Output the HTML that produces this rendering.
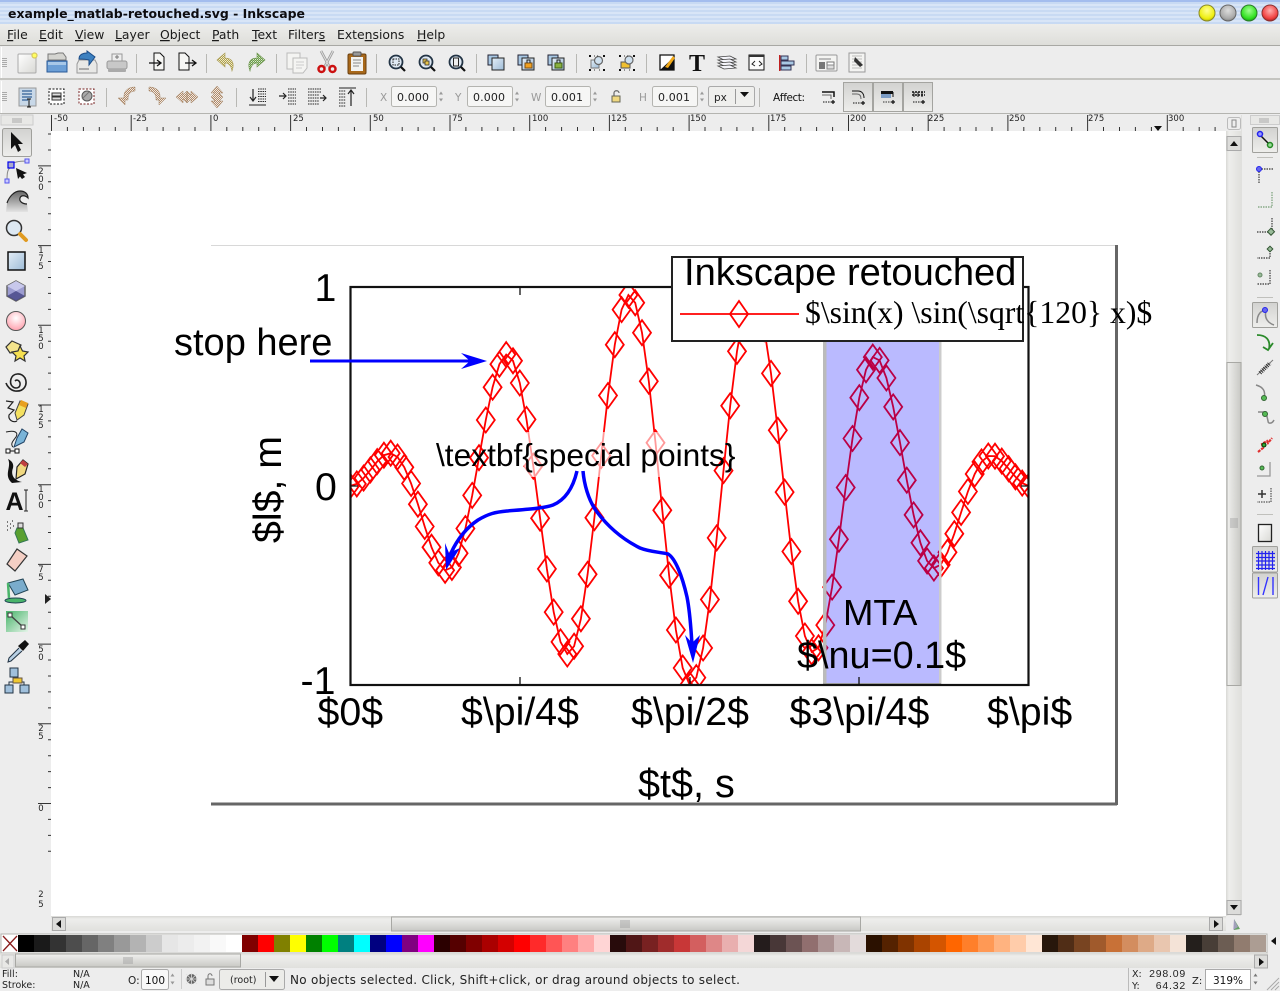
<!DOCTYPE html>
<html><head><meta charset="utf-8"><title>example_matlab-retouched.svg - Inkscape</title>
<style>
html,body{margin:0;padding:0;background:#ededed;overflow:hidden}
svg{display:block}
.d{font-family:"DejaVu Sans",sans-serif}
.l{font-family:"Liberation Sans",sans-serif}
.s{font-family:"Liberation Serif",serif}
.m{font-size:12.4px;fill:#1a1a1a}
.u{text-decoration:underline}
.r{font-size:8.5px;fill:#222}
.i{font-size:11px;fill:#222}
.g{font-size:10.5px;fill:#999}
.t{font-size:39.3px;fill:#000}
</style></head><body>
<svg width="1280" height="991" viewBox="0 0 1280 991" xmlns="http://www.w3.org/2000/svg">
<defs>
<pattern id="stripe" width="4" height="4" patternUnits="userSpaceOnUse"><rect width="4" height="4" fill="#c8daf3"/><rect width="4" height="2" fill="#d8e5f7"/></pattern>
<linearGradient id="menu" x1="0" y1="0" x2="0" y2="1"><stop offset="0" stop-color="#ededeb"/><stop offset="1" stop-color="#dededa"/></linearGradient>
<linearGradient id="sbv" x1="0" y1="0" x2="1" y2="0"><stop offset="0" stop-color="#d8d8d5"/><stop offset=".2" stop-color="#eeeeec"/><stop offset="1" stop-color="#e0e0dd"/></linearGradient>
<linearGradient id="sbh" x1="0" y1="0" x2="0" y2="1"><stop offset="0" stop-color="#d8d8d5"/><stop offset=".2" stop-color="#eeeeec"/><stop offset="1" stop-color="#e0e0dd"/></linearGradient>
<linearGradient id="thv" x1="0" y1="0" x2="1" y2="0"><stop offset="0" stop-color="#f0f0ee"/><stop offset="1" stop-color="#c8c8c4"/></linearGradient>
<linearGradient id="thh" x1="0" y1="0" x2="0" y2="1"><stop offset="0" stop-color="#f0f0ee"/><stop offset="1" stop-color="#c8c8c4"/></linearGradient>
<linearGradient id="btn" x1="0" y1="0" x2="0" y2="1"><stop offset="0" stop-color="#d2d2d0"/><stop offset="1" stop-color="#eeeeec"/></linearGradient>
<linearGradient id="blue" x1="0" y1="0" x2="1" y2="1"><stop offset="0" stop-color="#e4eef7"/><stop offset="1" stop-color="#9dbbd6"/></linearGradient>
<linearGradient id="paper" x1="0" y1="0" x2="1" y2="1"><stop offset="0" stop-color="#fff"/><stop offset="1" stop-color="#d8d8d4"/></linearGradient>
<radialGradient id="wy" cx=".5" cy=".35" r=".7"><stop offset="0" stop-color="#ffff90"/><stop offset=".7" stop-color="#eeee10"/><stop offset="1" stop-color="#a8a800"/></radialGradient>
<radialGradient id="wg" cx=".5" cy=".35" r=".7"><stop offset="0" stop-color="#ddd"/><stop offset=".7" stop-color="#aaa"/><stop offset="1" stop-color="#777"/></radialGradient>
<radialGradient id="wn" cx=".5" cy=".35" r=".7"><stop offset="0" stop-color="#a0ff90"/><stop offset=".7" stop-color="#30e020"/><stop offset="1" stop-color="#108810"/></radialGradient>
<radialGradient id="wr" cx=".5" cy=".35" r=".7"><stop offset="0" stop-color="#ffb0b0"/><stop offset=".7" stop-color="#f04040"/><stop offset="1" stop-color="#901818"/></radialGradient>
<radialGradient id="pink" cx=".5" cy=".35" r=".7"><stop offset="0" stop-color="#fff"/><stop offset="1" stop-color="#ff9aa8"/></radialGradient>
<linearGradient id="wave" x1="0" y1="0" x2="0" y2="1"><stop offset="0" stop-color="#666"/><stop offset="1" stop-color="#e4e4e4"/></linearGradient>
<linearGradient id="green" x1="0" y1="0" x2="1" y2="1"><stop offset="0" stop-color="#49b46a"/><stop offset="1" stop-color="#e4f4e8"/></linearGradient>
<clipPath id="plot"><rect x="350" y="287" width="679" height="398"/></clipPath>
<pattern id="dith" width="2" height="2" patternUnits="userSpaceOnUse"><rect width="2" height="2" fill="#b08a6a"/><rect width="1" height="1" fill="#f0e8e0"/><rect x="1" y="1" width="1" height="1" fill="#f0e8e0"/></pattern>
<pattern id="dithY" width="2" height="2" patternUnits="userSpaceOnUse"><rect width="2" height="2" fill="#b0a04a"/><rect width="1" height="1" fill="#f0ecd0"/><rect x="1" y="1" width="1" height="1" fill="#e4e0c0"/></pattern>
<pattern id="dithG" width="2" height="2" patternUnits="userSpaceOnUse"><rect width="2" height="2" fill="#6a9a4a"/><rect width="1" height="1" fill="#dcead0"/><rect x="1" y="1" width="1" height="1" fill="#a8c890"/></pattern>
</defs>

<!-- base -->
<rect width="1280" height="991" fill="#ededed"/>
<!-- title bar -->
<rect width="1280" height="24" fill="url(#stripe)"/>
<rect width="1280" height="2" fill="#a3bdee"/>
<text class="d" x="8" y="18" font-size="12" font-weight="bold" fill="#0c0c10" textLength="297" lengthAdjust="spacingAndGlyphs">example_matlab-retouched.svg - Inkscape</text>
<circle cx="1207" cy="13" r="8" fill="url(#wy)" stroke="#88882a"/>
<circle cx="1228" cy="13" r="8" fill="url(#wg)" stroke="#666"/>
<circle cx="1249" cy="13" r="8" fill="url(#wn)" stroke="#2a7a2a"/>
<circle cx="1270" cy="13" r="8" fill="url(#wr)" stroke="#883030"/>
<!-- menu -->
<rect y="24" width="1280" height="21" fill="url(#menu)"/>
<rect y="45" width="1280" height="1" fill="#a8a8a4"/>
<g class="d m">
<text x="7" y="39"><tspan class="u">F</tspan>ile</text>
<text x="39" y="39"><tspan class="u">E</tspan>dit</text>
<text x="75" y="39"><tspan class="u">V</tspan>iew</text>
<text x="115" y="39"><tspan class="u">L</tspan>ayer</text>
<text x="160" y="39"><tspan class="u">O</tspan>bject</text>
<text x="212" y="39"><tspan class="u">P</tspan>ath</text>
<text x="252" y="39"><tspan class="u">T</tspan>ext</text>
<text x="288" y="39">Filter<tspan class="u">s</tspan></text>
<text x="337" y="39">Exte<tspan class="u">n</tspan>sions</text>
<text x="417" y="39"><tspan class="u">H</tspan>elp</text>
</g>
<!-- toolbars bg -->
<rect y="78" width="1280" height="2" fill="#c4c4c0"/>
<rect y="113" width="1280" height="1" fill="#b4b4b0"/>
<rect x="1" y="47" width="1" height="31" fill="#fff"/><rect x="1" y="81" width="1" height="32" fill="#fff"/>
<g fill="#aaa"><rect x="2" y="58" width="5" height="1"/><rect x="2" y="60" width="5" height="1"/><rect x="2" y="62" width="5" height="1"/><rect x="2" y="64" width="5" height="1"/><rect x="2" y="66" width="5" height="1"/>
<rect x="2" y="92" width="5" height="1"/><rect x="2" y="94" width="5" height="1"/><rect x="2" y="96" width="5" height="1"/><rect x="2" y="98" width="5" height="1"/><rect x="2" y="100" width="5" height="1"/></g>
<!-- separators -->
<g fill="#b8b8b4">
<rect x="136" y="54" width="1" height="19"/><rect x="206" y="54" width="1" height="19"/><rect x="276" y="54" width="1" height="19"/><rect x="376" y="54" width="1" height="19"/><rect x="476" y="54" width="1" height="19"/><rect x="576" y="54" width="1" height="19"/><rect x="646" y="54" width="1" height="19"/><rect x="806" y="54" width="1" height="19"/>
<rect x="106" y="88" width="1" height="19"/><rect x="236" y="88" width="1" height="19"/><rect x="366" y="88" width="1" height="19"/><rect x="759" y="88" width="1" height="19"/>
</g>

<!-- toolbar 1 icons -->
<g transform="translate(27,63)"><rect x="-9" y="-9" width="18" height="19" rx="1" fill="url(#paper)" stroke="#aaa"/><circle cx="7.500" cy="-7.500" r="2.500" fill="#ffff60" stroke="#d8c860" stroke-width="1.200"/></g>
<g transform="translate(57,63)"><path d="M-9,-3V-9H-2L1,-10H6L9,-6V-3Z" fill="#d4d4d0" stroke="#777"/><rect x="-10" y="-2" width="20" height="11" fill="#6c9fd6" stroke="#2a5a98"/><rect x="-9" y="-1" width="18" height="3" fill="#a8c8e8"/></g>
<g transform="translate(87,63)"><path d="M-10,1L-8,-3H8L10,1V10H-10Z" fill="#e8e8e6" stroke="#999"/><rect x="-8" y="5" width="10" height="2" fill="#aaa"/><path d="M-8,-4C-8,-9 -3,-10 0,-10V-12L8,-6L2,2V-3C-2,-4 -5,-4 -8,-4Z" fill="#3c80c0" stroke="#1c4c88"/></g>
<g transform="translate(117,63)"><rect x="-5" y="-9" width="10" height="7" fill="#eee" stroke="#999"/><rect x="-10" y="-2" width="20" height="8" rx="2" fill="#c8c8c8" stroke="#999"/><rect x="-9" y="6" width="18" height="3" rx="1" fill="#aaa"/><path d="M-2,-6H2M0,-8V-4" stroke="#777"/></g>
<g transform="translate(157,63)"><path d="M-3,-10H3L7,-6V7H-3Z" fill="#f6f6f4" stroke="#111"/><path d="M-8,0H3M0,-3L4,0L0,3" fill="none" stroke="#111" stroke-width="1.300"/></g>
<g transform="translate(186,63)"><path d="M-7,-10H-1L3,-6V7H-7Z" fill="#f6f6f4" stroke="#111"/><path d="M-1,0H9M6,-3L10,0L6,3" fill="none" stroke="#111" stroke-width="1.300"/></g>
<g transform="translate(225,63)"><path d="M-8,-3L0,-10V-5C7,-5 10,0 7,8C6,2 3,0 0,0V4Z" fill="url(#dithY)" stroke="#a89a50" stroke-width=".6"/></g>
<g transform="translate(257,63)"><path d="M8,-3L0,-10V-5C-7,-5 -10,0 -7,8C-6,2 -3,0 0,0V4Z" fill="url(#dithG)" stroke="#689048" stroke-width=".6"/></g>
<g transform="translate(297,63)" stroke="#bbb" fill="#f4f4f2"><rect x="-10" y="-10" width="13" height="16"/><path d="M-4,-5H10V5L6,10H-4Z"/><path d="M-1,-1H7M-1,2H7M-1,5H5" stroke="#ccc" fill="none"/></g>
<g transform="translate(327,63)"><path d="M-6,-12L3,5M6,-12L-3,5" stroke="#9a9a9a" stroke-width="2.600"/><path d="M-6,-12L3,5M6,-12L-3,5" stroke="#e0e0e0" stroke-width="1"/><circle cx="-5.500" cy="6" r="3" fill="none" stroke="#cc1111" stroke-width="2.500"/><circle cx="5.500" cy="6" r="3" fill="none" stroke="#cc1111" stroke-width="2.500"/></g>
<g transform="translate(357,63)"><rect x="-9" y="-9" width="18" height="20" rx="1.500" fill="#a8681a" stroke="#6a4010"/><rect x="-6" y="-6" width="12" height="14" fill="#f2f2f0"/><rect x="-4" y="-11" width="8" height="4" rx="1" fill="#999" stroke="#555"/><path d="M-4,-3H4M-4,0H4M-4,3H2" stroke="#888"/></g>
<!-- zoom -->
<g transform="translate(397,63)"><circle cx="-1" cy="-1" r="6.500" fill="#dfe9f3" stroke="#234" stroke-width="1.800"/><rect x="-4" y="-4" width="6" height="6" fill="none" stroke="#222" stroke-dasharray="1.500 1"/><path d="M4,4L8,8" stroke="#111" stroke-width="2.200"/></g>
<g transform="translate(427,63)"><circle cx="-1" cy="-1" r="6.500" fill="#dfe9f3" stroke="#234" stroke-width="1.800"/><rect x="-4" y="-4" width="4" height="4" fill="#e8c44a" stroke="#333" stroke-width=".8"/><rect x="-2" y="-2" width="4" height="4" fill="#e8c44a" stroke="#333" stroke-width=".8"/><path d="M4,4L8,8" stroke="#111" stroke-width="2.200"/></g>
<g transform="translate(457,63)"><circle cx="-1" cy="-1" r="6.500" fill="#dfe9f3" stroke="#234" stroke-width="1.800"/><rect x="-3.500" y="-5" width="5" height="8" fill="#eee" stroke="#222"/><path d="M4,4L8,8" stroke="#111" stroke-width="2.200"/></g>
<!-- dup -->
<g transform="translate(497,63)"><rect x="-9" y="-8" width="10" height="10" fill="#a8c8e4" stroke="#223"/><rect x="-5" y="-5" width="12" height="12" fill="url(#blue)" stroke="#222"/></g>
<g transform="translate(527,63)"><rect x="-9" y="-8" width="10" height="10" fill="#a8c8e4" stroke="#223"/><rect x="-5" y="-5" width="12" height="12" fill="url(#blue)" stroke="#222"/><rect x="-2" y="0" width="7" height="5" fill="#f0a020" stroke="#805010"/><path d="M0,0V-3H3V0" fill="none" stroke="#222"/></g>
<g transform="translate(557,63)"><rect x="-9" y="-8" width="10" height="10" fill="#a8c8e4" stroke="#223"/><rect x="-5" y="-5" width="12" height="12" fill="url(#blue)" stroke="#222"/><rect x="-2" y="0" width="7" height="5" fill="#88b040" stroke="#406010"/><path d="M0,0V-3H3V0" fill="none" stroke="#222"/></g>
<g transform="translate(597,63)"><rect x="-6" y="-3" width="8" height="8" fill="url(#blue)" stroke="#777"/><circle cx="1.500" cy="-2.500" r="4" fill="#cfe0ee" stroke="#666" stroke-width="1.200"/><path d="M-8,-8h2v2h-2zM6,-8h2v2h-2zM-8,6h2v2h-2zM6,6h2v2h-2z" fill="#111"/><path d="M-3,-7.500h1v1h-1zM0,-7.500h1v1h-1zM-3,6.500h1v1h-1zM2,6.500h1v1h-1z" fill="#333"/></g>
<g transform="translate(627,63)"><rect x="-6" y="-1" width="9" height="6" fill="#f0c030" stroke="#555"/><circle cx="2" cy="-3" r="4" fill="#cfe0ee" stroke="#666" stroke-width="1.200"/><path d="M-8,-8h2v2h-2zM6,-8h2v2h-2zM-8,6h2v2h-2zM6,6h2v2h-2z" fill="#111"/><path d="M-3,-7.500h1v1h-1zM0,-7.500h1v1h-1zM-3,6.500h1v1h-1zM2,6.500h1v1h-1z" fill="#333"/></g>
<g transform="translate(667,63)"><path d="M-7,-8H7V7H-7Z" fill="#fff" stroke="#111" stroke-width="1.300"/><path d="M-7,7L7,-6V7Z" fill="#111"/><path d="M-2,4L6,-7L8,-5L1,5Z" fill="#f0a818"/></g>
<text x="697" y="71" text-anchor="middle" class="s" font-size="24" font-weight="bold" fill="#111">T</text>
<g transform="translate(727,63)" fill="#f4f4fa" stroke="#444" stroke-width=".8"><path d="M-9,-6L3,-7L9,-4L-3,-3Z"/><path d="M-9,-3L3,-4L9,-1L-3,0Z"/><path d="M-9,0L3,-1L9,2L-3,3Z"/><path d="M-9,3L3,2L9,5L-3,6Z"/></g>
<g transform="translate(757,63)"><rect x="-8" y="-8" width="15" height="15" fill="#fbfbfb" stroke="#111"/><rect x="-8" y="-8" width="15" height="2" fill="#333"/><path d="M-2,-2L-5,1L-2,3M2,-2L5,1L2,3" fill="none" stroke="#222"/></g>
<g transform="translate(787,63)"><rect x="-8" y="-8" width="1.400" height="16" fill="#c02020"/><rect x="-6" y="-7" width="7" height="4" fill="#a8c8e4" stroke="#335"/><rect x="-6" y="-2" width="13" height="4" fill="#a8c8e4" stroke="#335"/><rect x="-6" y="3" width="10" height="4" fill="#a8c8e4" stroke="#335"/></g>
<g transform="translate(827,63)"><rect x="-11" y="-8" width="21" height="16" rx="1" fill="#f4f4f2" stroke="#999"/><rect x="-8" y="-5" width="12" height="2" fill="#bbb"/><rect x="-8" y="-1" width="6" height="7" fill="#777"/><rect x="0" y="-1" width="7" height="3" fill="#fff" stroke="#777"/><rect x="0" y="2" width="7" height="4" fill="#ddd" stroke="#888"/></g>
<g transform="translate(857,63)"><rect x="-8" y="-10" width="16" height="19" fill="#f4f4f2" stroke="#999"/><path d="M-5,-7H5M-5,-4H5M-5,-1H5M-5,2H5M-5,5H5" stroke="#bbb"/><path d="M-2,-6L3,-1L6,2L3,4L0,1L-3,-2Z" fill="#333"/></g>

<!-- toolbar 2 icons -->
<g transform="translate(27,97)"><rect x="-8" y="-9" width="17" height="18" fill="#c8d8e8" stroke="#999"/><path d="M-5,-6H5M-5,-3H5M-5,0H5M-5,3H1" stroke="#4a74a4" stroke-width="1.400"/><path d="M2,2V10M0,2H4M0,10H4" stroke="#111"/></g>
<g transform="translate(57,97)"><rect x="-8" y="-8" width="15" height="15" fill="#fff" stroke="#111" stroke-dasharray="2 1.500"/><path d="M-5,-4H4V-1H-5ZM-5,0H4V3H-5Z" fill="#ddd" stroke="#333"/></g>
<g transform="translate(87,97)"><rect x="-8" y="-8" width="15" height="15" fill="#fff" stroke="#722" stroke-dasharray="2 1.500"/><circle cx="0" cy="-1" r="5" fill="#aaa" stroke="#555"/><path d="M-5,2L2,-5" stroke="#777"/></g>
<g transform="translate(127,97)"><path d="M-9,1L-2,8V3H1V1C1,-3 4,-6 8,-6V-10C1,-10 -3,-6 -3,-1V1H-3Z" fill="url(#dith)" stroke="#a08060" stroke-width=".5"/></g>
<g transform="translate(157,97)"><path d="M9,1L2,8V3H-1V1C-1,-3 -4,-6 -8,-6V-10C-1,-10 3,-6 3,-1V1H3Z" fill="url(#dith)" stroke="#a08060" stroke-width=".5"/></g>
<g transform="translate(187,97)"><path d="M-11,0L-4,-6V-2L0,-6V6L-4,2V6ZM11,0L4,-6V-2L0,-6V6L4,2V6Z" fill="url(#dith)" stroke="#a08060" stroke-width=".5"/></g>
<g transform="translate(217,97)"><path d="M0,-11L6,-4H2L6,0L2,4H6L0,11L-6,4H-2L-6,0L-2,-4H-6Z" fill="url(#dith)" stroke="#a08060" stroke-width=".5"/></g>
<g transform="translate(257,97)" stroke="#222" fill="none"><path d="M1,-8H9M1,-5.500H9M1,-3H9M1,-.5H9M1,2H9M1,4.500H9" stroke-dasharray="1.500 .8"/><path d="M-4,-8V3M-7,0L-4,4L-1,0" stroke-width="1.200"/><path d="M-8,8H9"/></g>
<g transform="translate(287,97)" stroke="#222" fill="none"><path d="M1,-8H9M1,-5H9M1,-2H9M1,1H9M1,4H9M1,7H9" stroke-dasharray="1.500 .8"/><path d="M-8,-1H-1M-4,-4L-1,-1L-4,2" stroke-width="1.200"/></g>
<g transform="translate(317,97)" stroke="#222" fill="none"><path d="M-9,-8H4M-9,-5H4M-9,-2H2M-9,1H2M-9,4H2M-9,7H2" stroke-dasharray="1.500 .8"/><path d="M3,1H9M6,-2L9,1L6,4" stroke-width="1.200"/></g>
<g transform="translate(347,97)" stroke="#222" fill="none"><path d="M-8,-9H9"/><path d="M-8,-6H-1M-8,-3H-1M-8,0H-1M-8,3H-1M-8,6H-1M-8,9H-1" stroke-dasharray="1.500 .8"/><path d="M4,9V-6M1,-3L4,-7L7,-3" stroke-width="1.200"/></g>

<!-- inputs -->
<g fill="#f6f6f5" stroke="#b4b4b0"><rect x="391.500" y="86.500" width="45" height="20" rx="2"/><rect x="467.500" y="86.500" width="45" height="20" rx="2"/><rect x="545.500" y="86.500" width="45" height="20" rx="2"/><rect x="652.500" y="86.500" width="45" height="20" rx="2"/></g>
<rect x="708.500" y="86.500" width="46" height="20" rx="2" fill="#efefed" stroke="#aaa"/>
<rect x="735" y="89" width="1" height="15" fill="#999"/>
<path d="M740,92H749L744.500,97Z" fill="#111"/>
<g class="d i"><text x="397" y="101" textLength="32">0.000</text><text x="473" y="101" textLength="32">0.000</text><text x="551" y="101" textLength="32">0.001</text><text x="658" y="101" textLength="32">0.001</text><text x="714" y="101" font-size="10.500">px</text></g>
<g class="d g"><text x="380" y="101">X</text><text x="455" y="101">Y</text><text x="531" y="101">W</text><text x="639" y="101">H</text></g>
<g fill="#999"><path d="M439,94.500h4l-2,-3zM439,98.500h4l-2,3zM515,94.500h4l-2,-3zM515,98.500h4l-2,3zM593,94.500h4l-2,-3zM593,98.500h4l-2,3zM700,94.500h4l-2,-3zM700,98.500h4l-2,3z"/></g>
<g transform="translate(616,97)"><rect x="-4" y="-1" width="8" height="6" fill="#f0d880" stroke="#665"/><path d="M-2,-1V-4C-2,-7 3,-7 3,-4" fill="none" stroke="#666" stroke-width="1.200"/></g>
<text class="d" x="773" y="101" font-size="10.500" fill="#111" textLength="32">Affect:</text>
<rect x="843.500" y="82.500" width="29" height="29" fill="url(#btn)" stroke="#a4a4a0"/>
<rect x="873.500" y="82.500" width="29" height="29" fill="url(#btn)" stroke="#a4a4a0"/>
<rect x="903.500" y="82.500" width="29" height="29" fill="url(#btn)" stroke="#a4a4a0"/>
<g transform="translate(828,97)" fill="none" stroke="#111"><path d="M-6,-5H6V0" stroke-width="1.500"/><path d="M-6,-2H3V2" stroke="#666"/><path d="M-5,5H3" stroke-dasharray="1.500 1"/><path d="M3,5H7M5,3V7" stroke-width="1.200"/></g>
<g transform="translate(858,97)" fill="none" stroke="#111"><path d="M-6,-6H0C4,-6 6,-3 6,1"/><path d="M-6,-3H-1C2,-3 3,-1 3,2" stroke="#666"/><path d="M-5,6H3" stroke-dasharray="1.500 1"/><path d="M3,6H7M5,4V8" stroke-width="1.200"/></g>
<g transform="translate(888,97)" fill="none"><rect x="-7" y="-6" width="12" height="3" fill="#111"/><rect x="-7" y="-3" width="10" height="4" fill="#7c9cc4"/><path d="M5,-5V0" stroke="#111"/><path d="M-5,5H3" stroke="#333" stroke-dasharray="1.500 1"/><path d="M3,5H7M5,3V7" stroke="#111" stroke-width="1.200"/></g>
<g transform="translate(918,97)" fill="none" stroke="#111"><path d="M-6,-5H7M-6,-2H7" stroke-width="1.500" stroke-dasharray="2 1"/><path d="M-4,-5V0M0,-5V0M4,-5V0" /><path d="M-5,5H3" stroke-dasharray="1.500 1"/><path d="M3,5H7M5,3V7" stroke-width="1.200"/></g>

<!-- canvas -->
<rect x="51" y="131" width="1175" height="785" fill="#fff"/>

<!-- page -->
<rect x="211" y="245" width="905" height="1" fill="#d8d8d8"/>
<rect x="1115" y="245" width="3" height="560" fill="#666"/>
<rect x="211" y="802.500" width="906" height="3" fill="#666"/>

<!-- curve -->
<g clip-path="url(#plot)"><g id="curve" fill="none" stroke="#ff0000" stroke-width="1.800"></g></g>
<!-- pale rect -->
<rect x="524" y="432" width="144" height="45" fill="#fff" fill-opacity=".6"/>
<!-- blue band -->
<rect x="825" y="287" width="115" height="397" fill="#0000ff" fill-opacity=".27"/>
<rect x="823" y="287" width="3.500" height="398" fill="#bbb"/>
<rect x="939" y="287" width="2.500" height="398" fill="#ccc"/>
<rect x="823" y="683" width="118" height="2" fill="#aaa"/>

<!-- axes -->
<rect x="350.500" y="287" width="678" height="398" fill="none" stroke="#111" stroke-width="2.200"/>
<path d="M520,287v8M690,287v8M859,287v8M520,685v-8M690,685v-8M859,685v-8M350,486h8M1029,486h-8" stroke="#111" stroke-width="1.300"/>

<!-- legend -->
<rect x="672" y="257" width="351" height="84" fill="#fff" stroke="#222" stroke-width="2"/>
<path d="M680,314H799" stroke="#f00" stroke-width="1.800"/>
<path d="M739,301L748,314L739,327L730,314Z" fill="none" stroke="#f00" stroke-width="1.800"/>

<!-- text -->
<g class="l">
<text class="t" x="314.500" y="301">1</text>
<text class="t" x="315" y="500">0</text>
<text class="t" x="300.500" y="694">-1</text>
<text class="t" x="317.500" y="725">$0$</text>
<text class="t" x="461" y="725">$\pi/4$</text>
<text class="t" x="631" y="725">$\pi/2$</text>
<text class="t" x="789.500" y="725">$3\pi/4$</text>
<text class="t" x="987" y="725">$\pi$</text>
<text x="638" y="797" font-size="39.600">$t$, s</text>
<text class="t" transform="translate(281,543) rotate(-90)">$l$, m</text>
<text x="174" y="355" font-size="38">stop here</text>
<text x="684" y="285" font-size="38.100">Inkscape retouched</text>
<text x="436" y="466" font-size="31.700">\textbf{special points}</text>
<text x="843" y="625" font-size="36.500">MTA</text>
<text x="797" y="668" font-size="37.800">$\nu=0.1$</text>
</g>
<text class="s" x="805" y="323" font-size="31.700" fill="#000">$\sin(x) \sin(\sqrt{120} x)$</text>

<!-- arrows -->
<g fill="none" stroke="#0000ff">
<path d="M310,361H472" stroke-width="3"/>
<path d="M577,471C573,488 565,500 553,505C545,508 530,509 507,511C495,512 488,514 478,520C466,528 457,540 451,553" stroke-width="3.500"/>
<path d="M583,471C584,483 588,500 597,512C606,524 620,538 640,548C650,552 660,552 668,554C675,558 682,575 687,597C690,612 691,628 692,645" stroke-width="3.500"/>
</g>
<g fill="#0000ff">
<path d="M487,361L461,353L470,361L461,369Z"/>
<path d="M446,570L445,543L449,553L460,548Z"/>
<path d="M693,663L685,635L692,643L700,635Z"/>
</g>

<!-- rulers -->
<rect x="36" y="114" width="1190" height="17" fill="#ededed"/>
<rect x="36" y="114" width="15" height="802" fill="#ededed"/>
<g id="rulers" fill="#333"></g>
<rect x="2" y="114" width="32" height="11" fill="#ededed"/>
<rect x="1" y="115" width="32" height="10" fill="#e8e8e6" stroke="#ccc"/>
<path d="M13,118v5M15,118v5M17,118v5M19,118v5M21,118v5" stroke="#999" stroke-width=".8"/>
<g class="d r">
<text x="54" y="121">-50</text><text x="133" y="121">-25</text><text x="213" y="121">0</text><text x="293" y="121">25</text><text x="373" y="121">50</text><text x="452" y="121">75</text><text x="532" y="121">100</text><text x="611" y="121">125</text><text x="690" y="121">150</text><text x="770" y="121">175</text><text x="850" y="121">200</text><text x="928" y="121">225</text><text x="1009" y="121">250</text><text x="1088" y="121">275</text><text x="1168" y="121">300</text>
</g>
<g class="d r" text-anchor="middle">
<text x="41" y="174">2</text><text x="41" y="182">0</text><text x="41" y="190">0</text>
<text x="41" y="253">1</text><text x="41" y="261">7</text><text x="41" y="269">5</text>
<text x="41" y="333">1</text><text x="41" y="341">5</text><text x="41" y="349">0</text>
<text x="41" y="412">1</text><text x="41" y="420">2</text><text x="41" y="428">5</text>
<text x="41" y="492">1</text><text x="41" y="500">0</text><text x="41" y="508">0</text>
<text x="41" y="572">7</text><text x="41" y="580">5</text>
<text x="41" y="652">5</text><text x="41" y="660">0</text>
<text x="41" y="731">2</text><text x="41" y="739">5</text>
<text x="41" y="811">0</text>
<text x="41" y="897">2</text><text x="41" y="907">5</text>
</g>
<path d="M1154,126H1162L1158,131Z" fill="#111"/>
<path d="M45,594V604L51,599Z" fill="#222"/>

<!-- left toolbox -->
<rect x="2.500" y="128.500" width="29" height="28" rx="2" fill="url(#btn)" stroke="#a0a09c"/>
<g transform="translate(16,142)"><path d="M-5,-10V7L-1,3L2,10L5,8L2,2H7Z" fill="#111"/></g>
<!-- node -->
<g transform="translate(16,172)"><path d="M-5,-7C-3,-10 4,-11 11,-11M-5,-5C-9,-3 -9,3 -9,9" fill="none" stroke="#888"/><rect x="-8" y="-10" width="6" height="6" fill="#aac" stroke="#00e" stroke-width="1.200"/><rect x="9" y="-13" width="4" height="4" fill="#ccf" stroke="#55e"/><rect x="-11" y="7" width="4" height="4" fill="#ccf" stroke="#55e"/><path d="M0,-4L11,1L7,2.500L9,5L6,7L4,4.500L2,7Z" fill="#111"/></g>
<!-- tweak -->
<path d="M6,212L7,203C9,197 14,191 20,191C25,191 28,194 28,198C25,195 21,195 20,198C19,201 22,204 27,204L28,212Z" fill="url(#wave)"/>
<path d="M7,203C9,197 14,191 20,191C25,191 28,194 28,198C25,195 21,195 20,198C19,201 22,204 27,204" fill="none" stroke="#222" stroke-width="1.200"/>
<!-- zoom -->
<g transform="translate(16,230)"><circle cx="-2" cy="-2" r="7.500" fill="#dde8f2" stroke="#333" stroke-width="1.500"/><path d="M4,4L10,10" stroke="#e09a20" stroke-width="4" stroke-linecap="round"/></g>
<rect x="8" y="252" width="17" height="18" fill="url(#blue)" stroke="#111" stroke-width="1.500"/>
<g transform="translate(16,291)"><path d="M0,-10L9,-5V5L0,10L-9,5V-5Z" fill="#9c9cd0" stroke="#666" stroke-width="1.500"/><path d="M-9,-5L0,0L9,-5L0,-10Z" fill="#c8c8ec"/><path d="M0,0L9,5L0,10L-9,5Z" fill="#454585" opacity=".8"/></g>
<circle cx="16" cy="321" r="9.500" fill="url(#pink)" stroke="#555" stroke-width="1"/>
<g transform="translate(16,351)"><path d="M-4,-10L5,-6L2,1L-6,2L-10,-4Z" fill="#f4e48c" stroke="#333" stroke-width="1.200"/><path d="M4,-5L6.500,0L12,1L8,5L9,10L4,7L-1,10L0,5L-4,1L2,0Z" fill="#f6e050" stroke="#333" stroke-width="1.200"/></g>
<path d="M15,381C18,378 22,383 19,387C15,390 9,386 11,379C13,373 21,372 25,378C28,385 24,392 15,391C10,390 7,386 6,383" fill="none" stroke="#222" stroke-width="1.600"/>
<!-- pencil -->
<g transform="translate(16,411)"><path d="M-10,-10L-3,-9L-8,-3L-2,-1L-7,4C-8,9 -3,12 1,10" fill="none" stroke="#222" stroke-width="1.200"/><path d="M1,9L-1,2L4,-10L12,-7L8,4Z" fill="#f4e060" stroke="#444"/><path d="M5,-11L12,-8L10,-3L3,-6Z" fill="#e8a020"/></g>
<!-- pen -->
<g transform="translate(16,441)"><path d="M-10,-9C-2,-11 3,-9 0,-4C-3,0 -6,3 -3,6" fill="none" stroke="#222"/><rect x="-10" y="8" width="4" height="4" fill="#fff" stroke="#111"/><rect x="-1" y="8" width="4" height="4" fill="#fff" stroke="#111"/><path d="M-6,10H-1" stroke="#111"/><path d="M-2,6L1,-3L6,-12L12,-8L8,1Z" fill="#7ab4d8" stroke="#246"/></g>
<!-- calligraphy -->
<g transform="translate(16,471)"><path d="M-8,-12C-4,-4 -13,4 -4,12L6,11C-4,9 -5,2 -3,-3C-2,-7 -4,-10 -8,-12Z" fill="#111"/><path d="M0,8L1,-4L7,-11L12,-7L9,3Z" fill="#f0d880" stroke="#222" stroke-width="1.200"/><path d="M4,-8L7,-11L12,-7L9,-4Z" fill="#c04040"/></g>
<text x="14.500" y="510" text-anchor="middle" class="l" font-size="25" font-weight="bold" fill="#111">A</text>
<path d="M26,490V511" stroke="#222"/><path d="M24,490h4M24,511h4" stroke="#222"/>
<!-- spray -->
<g transform="translate(16,531)"><path d="M-9,-9h2M-6,-7h2M-9,-5h2M-6,-3h2M-9,-1h2M-4,-10h2M-3,-5h2" stroke="#333" stroke-width="1.200" stroke-dasharray="1 1"/><path d="M1,-3H7L12,9L3,12L-1,2Z" fill="#59a030" stroke="#375"/><rect x="2" y="-8" width="5" height="5" fill="#ddd" stroke="#333"/></g>
<!-- eraser -->
<path d="M17,549L27,556L15,571L7,564Z" fill="#f4cfc4" stroke="#333" stroke-width="1.200"/>
<!-- bucket -->
<g transform="translate(16,591)"><ellipse cx="-.5" cy="9.500" rx="10.500" ry="2.500" fill="#49b46a" stroke="#245"/><path d="M-8,-8L7,-12L12,-1L-1,4Z" fill="#7aaccc" stroke="#245"/><path d="M-8,-8L-7,7" stroke="#49b46a" stroke-width="2.500"/></g>
<!-- gradient -->
<g transform="translate(16,621)"><rect x="-10" y="-10" width="22" height="21" fill="url(#green)"/><path d="M-6,-6L7,6" stroke="#444" stroke-width="1.400"/><rect x="-8" y="-8" width="4" height="4" fill="#fff" stroke="#333"/><rect x="5" y="4" width="4" height="4" fill="#fff" stroke="#333"/></g>
<!-- dropper -->
<g transform="translate(16,651)"><path d="M3,-3L-7,7L-8,11L-5,10L6,0" fill="#b8d0e4" stroke="#234"/><path d="M2,-5L7,0L13,-7L9,-11Z" fill="#111"/></g>
<!-- connector -->
<g transform="translate(16,681)" stroke="#234" fill="#a0c0dc"><path d="M-2,-4V0M-7,4V1H8V4" fill="none"/><rect x="-6" y="-13" width="8" height="9"/><rect x="-11" y="4" width="8" height="8"/><rect x="4" y="4" width="9" height="8"/><rect x="-3" y="-3" width="9" height="5" fill="#f0c830" stroke="#654"/></g>

<!-- v scrollbar -->
<rect x="1226" y="131" width="15" height="785" fill="url(#sbv)"/>
<rect x="1241" y="115" width="1" height="800" fill="#e0e0de"/>
<rect x="1227.500" y="117.500" width="13" height="12" rx="2" fill="#eee" stroke="#bbb"/>
<path d="M1232,120h4v7h-4z" fill="none" stroke="#888"/>
<rect x="1227" y="136.500" width="14" height="14" fill="#dcdcda" stroke="#aaa"/>
<path d="M1230,146H1238L1234,141Z" fill="#111"/>
<rect x="1227" y="362.500" width="14" height="323" fill="url(#thv)" stroke="#a8a8a4"/>
<path d="M1230,519h8M1230,521h8M1230,523h8M1230,525h8M1230,527h8" stroke="#999" stroke-width=".8"/>
<rect x="1227" y="900.500" width="14" height="14" fill="#dcdcda" stroke="#aaa"/>
<path d="M1230,905H1238L1234,910Z" fill="#111"/>

<!-- h scrollbar -->
<rect x="51" y="916" width="1175" height="15" fill="url(#sbh)"/>
<rect x="52.500" y="917.500" width="13" height="13" fill="#dcdcda" stroke="#aaa"/>
<path d="M61,920V928L56,924Z" fill="#111"/>
<rect x="391.500" y="917" width="469" height="14" fill="url(#thh)" stroke="#a8a8a4"/>
<path d="M621,920v8M623,920v8M625,920v8M627,920v8M629,920v8" stroke="#999" stroke-width=".8"/>
<rect x="1209.500" y="917.500" width="13" height="13" fill="#dcdcda" stroke="#aaa"/>
<path d="M1214,920V928L1219,924Z" fill="#111"/>
<g transform="translate(1234,924)"><path d="M0,-5L6,5L0,6Z" fill="#64a064"/><path d="M0,-5L-1,6L4,3Z" fill="#b0a0d0" opacity=".8"/></g>

<!-- right toolbar -->
<rect x="1250.500" y="115.500" width="29" height="9" fill="#e8e8e6" stroke="#ccc"/>
<path d="M1260,118v5M1262,118v5M1264,118v5M1266,118v5M1268,118v5" stroke="#999" stroke-width=".8"/>
<rect x="1252.500" y="127.500" width="25" height="25" rx="1" fill="url(#btn)" stroke="#a0a09c"/>
<g transform="translate(1265,140)"><path d="M-5,-5L4,4" stroke="#111" stroke-width="1.500"/><circle cx="-5" cy="-6" r="2.500" fill="#99f" stroke="#22e" stroke-width="1.500"/><circle cx="5" cy="5" r="2.500" fill="#9d9" stroke="#282" stroke-width="1.500"/></g>
<g fill="#c0c0bc"><rect x="1257" y="157" width="16" height="1"/><rect x="1257" y="297" width="16" height="1"/><rect x="1257" y="514" width="16" height="1"/></g>
<g fill="none" stroke="#555" stroke-width="1.400" stroke-dasharray="1.500 1">
<path d="M1259,169H1273M1259,169V183"/>
<path d="M1272,192V207H1257" stroke="#8a8"/>
<path d="M1272,218V232H1257"/>
<path d="M1270,248V258H1257"/>
<path d="M1270,270V284H1257"/>
</g>
<circle cx="1259" cy="169" r="2.500" fill="#66e" stroke="#22e"/>
<rect x="1269" y="229" width="5" height="5" transform="rotate(45 1271 231)" fill="#9b9" stroke="#353"/>
<rect x="1268" y="247" width="4" height="4" transform="rotate(45 1270 249)" fill="#9b9" stroke="#353"/>
<circle cx="1260" cy="275" r="2" fill="#9b9" stroke="#686"/>
<rect x="1252.500" y="302.500" width="25" height="25" rx="1" fill="url(#btn)" stroke="#a0a09c"/>
<path d="M1257,323C1257,313 1262,310 1266,311C1264,318 1268,323 1274,325" fill="none" stroke="#888" stroke-width="1.500"/>
<circle cx="1265" cy="310" r="2.500" fill="#66e" stroke="#22e"/>
<path d="M1257,335C1265,335 1271,339 1269,349M1263,347L1268,350L1273,343" fill="none" stroke="#2a8a2a" stroke-width="1.800"/>
<path d="M1257,375L1273,360" stroke="#777" fill="none"/><path d="M1260,373L1270,363" stroke="#333" stroke-width="4" stroke-dasharray="1 1" fill="none"/>
<path d="M1256,385C1263,387 1266,391 1264,398" fill="none" stroke="#888" stroke-width="1.500"/><circle cx="1264" cy="398" r="2.500" fill="#5b5" stroke="#363"/>
<path d="M1258,412H1266L1268,421C1268,424 1272,424 1274,420" fill="none" stroke="#888" stroke-width="1.500"/><circle cx="1265" cy="414" r="2.500" fill="#5b5" stroke="#363"/>
<path d="M1258,452L1263,448L1262,444L1267,441L1268,443L1272,438" fill="none" stroke="#e03030" stroke-width="2.200" stroke-dasharray="3 1"/><circle cx="1264" cy="445" r="2" fill="#3a3" stroke="#030"/>
<path d="M1270,462V476H1257" fill="none" stroke="#999" stroke-width="1.300"/><circle cx="1262" cy="468" r="2" fill="#5b5" stroke="#363"/>
<path d="M1271,488V502H1257" fill="none" stroke="#333" stroke-dasharray="1.500 1"/><path d="M1258,494H1266M1262,490V498" stroke="#333" stroke-width="1.500"/>
<rect x="1258.500" y="524.500" width="13" height="17" fill="url(#paper)" stroke="#222" stroke-width="1.300"/>
<rect x="1252.500" y="546.500" width="25" height="25.500" rx="1" fill="url(#btn)" stroke="#a0a09c"/>
<path d="M1258.500,551V570M1262,551V570M1265.500,551V570M1269,551V570M1272.500,551V570M1256,553.500H1275M1256,557.500H1275M1256,561H1275M1256,565H1275M1256,568.500H1275" stroke="#22e" stroke-width="1.200" fill="none"/>
<rect x="1252.500" y="573" width="25" height="25" rx="1" fill="url(#btn)" stroke="#a0a09c"/>
<path d="M1258.500,577V595M1263,595L1268,577M1273,577V595" stroke="#33f" stroke-width="1.400" fill="none"/>

<!-- palette -->
<rect x="1" y="934" width="1266" height="19" fill="#fff" stroke="#b4b4b0"/>
<g id="pal"></g>
<rect x="2" y="935" width="16" height="17" fill="#fff"/>
<path d="M3,936L17,951M17,936L3,951" stroke="#8a1c1c" stroke-width="1.300"/>
<path d="M1276,937V945L1271,941Z" fill="#111"/>
<rect x="0" y="953" width="1268" height="15" fill="url(#sbh)"/>
<rect x="2" y="955" width="12" height="13" fill="#e8e8e6" stroke="#ccc"/>
<path d="M9,958V965L5,961.500Z" fill="#aaa"/>
<rect x="15.500" y="954" width="225" height="13" fill="url(#thh)" stroke="#a8a8a4"/>
<path d="M124,957v7M126,957v7M128,957v7M130,957v7M132,957v7" stroke="#999" stroke-width=".8"/>
<rect x="1254.500" y="955" width="13" height="13" fill="#dcdcda" stroke="#aaa"/>
<path d="M1259,958V966L1264,962Z" fill="#111"/>

<!-- status -->
<g class="d" font-size="9.500" fill="#222">
<text x="2" y="977">Fill:</text><text x="2" y="988">Stroke:</text>
<text x="73" y="977">N/A</text><text x="73" y="988">N/A</text>
</g>
<text class="d" x="128" y="984" font-size="10.500" fill="#222">O:</text>
<rect x="141.500" y="969.500" width="27" height="20" rx="2" fill="#f8f8f8" stroke="#aaa"/>
<text class="d" x="145" y="984" font-size="10.500" fill="#111">100</text>
<path d="M170.500,976.500h4l-2,-3zM170.500,981.500h4l-2,3z" fill="#999"/>
<rect x="181" y="969" width="1" height="20" fill="#ccc"/>
<circle cx="191.500" cy="979" r="5" fill="#666"/><path d="M186,974L197,984M197,974L186,984M191.500,973V985M185,979H198" stroke="#ddd" stroke-width=".8"/>
<g transform="translate(210,980)"><rect x="-4" y="-1" width="8" height="6" fill="#ddd" stroke="#777"/><path d="M-2,-1V-4C-2,-7 2,-7 2,-4" fill="none" stroke="#777"/></g>
<rect x="219.500" y="969.500" width="65" height="20" rx="2" fill="#ecece9" stroke="#aaa"/>
<rect x="265" y="972" width="1" height="15" fill="#999"/>
<path d="M269,976H279L274,982Z" fill="#111"/>
<text class="d" x="230" y="983" font-size="9.500" fill="#222">(root)</text>
<text class="d" x="290" y="984" font-size="12" fill="#222" textLength="450">No objects selected. Click, Shift+click, or drag around objects to select.</text>
<rect x="1128" y="968" width="1" height="23" fill="#bbb"/>
<g class="d" font-size="9.500" fill="#222"><text x="1132" y="977">X:</text><text x="1132" y="989">Y:</text></g>
<g class="l" font-size="10.500" fill="#222" text-anchor="end" letter-spacing=".8"><text x="1186" y="977">298.09</text><text x="1186" y="989">64.32</text></g>
<text class="d" x="1192" y="984" font-size="10" fill="#222">Z:</text>
<rect x="1205.500" y="969.500" width="45" height="20" fill="#fff" stroke="#aaa"/>
<text class="d" x="1213" y="984" font-size="10.500" fill="#111">319%</text>
<path d="M1253.500,976.500h4l-2,-3zM1253.500,981.500h4l-2,3z" fill="#777"/>
<path d="M1267,990L1279,978M1271,990L1279,982M1275,990L1279,986" stroke="#aaa"/>
</svg>
<script>
(function(){
var NS="http://www.w3.org/2000/svg";
function el(p,n,a){var e=document.createElementNS(NS,n);for(var k in a)e.setAttribute(k,a[k]);p.appendChild(e);return e;}
var c=document.getElementById("curve"),pts=[],d="";
for(var i=0;i<=100;i++){var t=Math.PI*i/100,x=350+6.79*i,y=486-199*Math.sin(t)*Math.sin(Math.sqrt(120)*t);
pts.push(x.toFixed(1)+","+y.toFixed(1));
d+="M"+x.toFixed(1)+","+(y-12.5).toFixed(1)+"l9,12.5l-9,12.5l-9,-12.5z";}
el(c,"polyline",{points:pts.join(" ")});el(c,"path",{d:d});
var r=document.getElementById("rulers"),s="",k;
for(k=0;k<75;k++){var X=51+15.94*k;if(X>1226)break;var maj=(k%5===0);
s+="M"+X.toFixed(1)+","+(maj?115:127)+"H"+(X+1).toFixed(1)+"V131H"+X.toFixed(1)+"z";}
for(k=-3;k<50;k++){var Y=803-15.94*k;if(Y<132||Y>915)continue;var m=((k%5)===0);
s+="M"+(m?38:48)+","+Y.toFixed(1)+"H51V"+(Y+1).toFixed(1)+"H"+(m?38:48)+"z";}
el(r,"path",{d:s});
var cols="000000 1a1a1a 333333 4d4d4d 666666 808080 999999 b3b3b3 cccccc e6e6e6 ececec f2f2f2 f9f9f9 ffffff 800000 ff0000 808000 ffff00 008000 00ff00 008080 00ffff 000080 0000ff 800080 ff00ff 2b0000 550000 800000 aa0000 d40000 ff0000 ff2a2a ff5555 ff8080 ffaaaa ffd5d5 280b0b 501616 782121 a02c2c c83737 d35f5f de8787 e9afaf f4d7d7 241c1c 483737 6c5353 916f6f ac9393 c8b7b7 e3dbdb 2b1100 552200 803300 aa4400 d45500 ff6600 ff7f2a ff9955 ffb380 ffccaa ffe6d5 28170b 502d16 784421 a05a2c c87137 d38d5f deaa87 e9c6af f4e3d7 241f1c 483e37 6c5d53 917c6f ac9d93".split(" ");
var p=document.getElementById("pal");
cols.forEach(function(h,i){el(p,"rect",{x:18+16*i,y:935,width:16,height:17,fill:"#"+h});});
})();
</script>
</body></html>
